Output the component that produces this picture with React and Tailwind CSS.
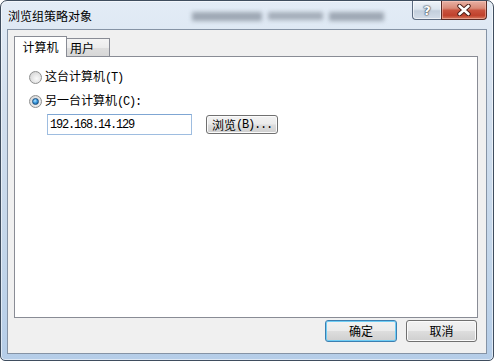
import React from "react";

const mono = "font-['Liberation_Mono',monospace] text-[12px] tracking-[-1.2px]";

function Radio({ checked }) {
  return (
    <span className="w-[13px] h-[13px] shrink-0 rounded-full border border-[#8e8f8f] bg-[radial-gradient(circle_at_60%_60%,#fafafa_0%,#e2e2e2_55%,#c9c9c9_100%)] flex items-center justify-center">
      {checked && (
        <span className="w-[7px] h-[7px] rounded-full border border-[#1c5180] bg-[radial-gradient(circle_at_40%_35%,#b6e6ff_0%,#3c9be0_45%,#0f4f8a_100%)]" />
      )}
    </span>
  );
}

function Button({ children, def, w }) {
  return (
    <div
      className={
        "h-[22px] rounded-[3px] border flex items-center justify-center text-[12px] text-black bg-[linear-gradient(180deg,#f2f2f2_0%,#ebebeb_48%,#dddddd_52%,#cfcfcf_100%)] " +
        (def
          ? "border-[#3c7fb1] shadow-[inset_0_0_0_1px_#6fcdf5]"
          : "border-[#707070] shadow-[inset_0_0_0_1px_#fbfbfb]") +
        " " +
        w
      }
    >
      {children}
    </div>
  );
}

export default function App() {
  return (
    <div className="w-[494px] h-[361px] bg-white font-['Noto_Sans_CJK_SC',sans-serif] text-black">
      <div className="w-[494px] h-[361px] rounded-t-[7px] rounded-b-[5px] border border-[#3f4d5e] bg-[linear-gradient(180deg,#e3ecf6_0%,#d2dfee_30%,#c3d6ea_70%,#b5cde8_100%)] shadow-[inset_0_0_0_1px_rgba(255,255,255,0.55)] flex flex-col overflow-hidden">
        {/* title bar */}
        <div className="h-[28px] flex items-start shrink-0">
          <div className="self-center pl-[7px] pt-[1px] text-[12px] leading-[14px] text-black">浏览组策略对象</div>
          <div className="self-center ml-[100px] mt-[2px] flex items-center gap-[6px] opacity-60 blur-[2px]">
            <div className="w-[70px] h-[9px] bg-[#737d8a]" />
            <div className="w-[55px] h-[8px] bg-[#7d8692]" />
            <div className="w-[55px] h-[9px] bg-[#737d8a]" />
          </div>
          <div className="ml-auto mr-[6px] flex">
            <div className="w-[29px] h-[19px] rounded-bl-[4px] border border-t-0 border-r-0 border-[#5b6b80] bg-[linear-gradient(180deg,#eef3f8_0%,#dce5ee_45%,#c3cfdc_55%,#d3dde8_100%)] shadow-[inset_0_0_0_1px_rgba(255,255,255,0.6)] flex items-center justify-center">
              <span className="text-[13px] leading-[13px] font-bold text-white font-['DejaVu_Sans',sans-serif] [text-shadow:0_0_1px_#3a4450,0_0_1px_#3a4450,0_0_2px_#3a4450]">?</span>
            </div>
            <div className="w-[46px] h-[19px] rounded-br-[4px] border border-t-0 border-[#5a2b25] bg-[linear-gradient(180deg,#e8b1a4_0%,#d98a78_40%,#c9533e_52%,#c0412c_80%,#d67a5f_100%)] shadow-[inset_0_0_0_1px_rgba(255,210,200,0.45)] flex items-center justify-center">
              <svg width="16" height="12" viewBox="0 0 16 12">
                <path d="M3.5 2 L12.5 10 M12.5 2 L3.5 10" stroke="#4a1d17" strokeWidth="4.4" strokeLinecap="round" />
                <path d="M3.5 2 L12.5 10 M12.5 2 L3.5 10" stroke="#ffffff" strokeWidth="2.6" strokeLinecap="round" />
              </svg>
            </div>
          </div>
        </div>

        {/* client area */}
        <div className="mx-[6px] mb-[6px] h-[325px] border border-[#8593a5] bg-[#f0f0f0] pl-[6px] pr-[8px] pt-[6px] flex flex-col">
          {/* tabs */}
          <div className="h-[21px] flex items-end relative z-10">
            <div className="w-[53px] h-[21px] border border-b-0 border-[#898c95] bg-white flex items-center justify-center text-[12px] leading-[14px]">
              计算机
            </div>
            <div className="w-[43px] h-[18px] mb-[1px] border border-l-0 border-b-0 border-[#898c95] bg-[linear-gradient(180deg,#f4f4f4_0%,#ececec_50%,#dedede_52%,#d7d7d7_100%)] flex items-center pl-[3px] text-[12px] leading-[14px]">
              用户
            </div>
          </div>

          {/* panel */}
          <div className="-mt-[1px] h-[262px] border border-[#898c95] bg-white flex flex-col pl-[14px] pt-[12px]">
            <div className="h-[16px] flex items-center gap-[2px]">
              <Radio />
              <span className="text-[12px] leading-[14px] ml-[1px]">
                这台计算机<span className={mono}>(T)</span>
              </span>
            </div>
            <div className="h-[16px] mt-[8px] flex items-center gap-[2px]">
              <Radio checked />
              <span className="text-[12px] leading-[14px] ml-[1px]">
                另一台计算机<span className={mono}>(C):</span>
              </span>
            </div>
            <div className="mt-[5px] ml-[18px] flex items-center">
              <div className="w-[145px] h-[21px] border border-[#9ebde0] border-t-[#7fa6d3] bg-white flex items-center pl-[2px]">
                <span className={mono + " text-[#000]"}>192.168.14.129</span>
              </div>
              <div className="ml-[14px] w-[72px] h-[19px] rounded-[3px] border border-[#707070] shadow-[inset_0_0_0_1px_#fbfbfb] bg-[linear-gradient(180deg,#f2f2f2_0%,#ebebeb_48%,#dddddd_52%,#cfcfcf_100%)] flex items-center justify-center text-[12px] leading-[14px]">
                浏览<span className={mono}>(B)...</span>
              </div>
            </div>
          </div>

          {/* bottom buttons */}
          <div className="mt-[2px] flex justify-end gap-[9px] pr-[1px]">
            <Button def w="w-[72px]">确定</Button>
            <Button w="w-[71px]">取消</Button>
          </div>
        </div>
      </div>
    </div>
  );
}
